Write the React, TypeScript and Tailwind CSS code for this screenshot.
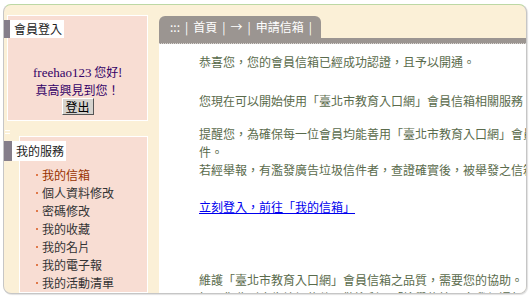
import React from 'react'

const cjk = { fontFamily: '"Noto Sans CJK TC", "Noto Sans", sans-serif' }

const services = ['我的信箱', '個人資料修改', '密碼修改', '我的收藏', '我的名片', '我的電子報', '我的活動清單']

function SideLabel({ text, h, w, bar }: { text: string; h: string; w: string; bar: string }) {
  return (
    <div className={`flex ${h} ${w} bg-white`}>
      <div className={`${bar} bg-[#857e8a]`} />
      <span className="pl-[4px] text-[12px] leading-none self-center text-[#222]">{text}</span>
    </div>
  )
}

export default function App() {
  return (
    <div className="w-[530px] h-[300px] bg-white pt-[4px] pl-[3px]" style={cjk}>
      <div className="w-[524px] h-[290px] flex overflow-hidden rounded-[8px] border border-[#c6c6c6] border-t-[#bcd8a4] bg-[#fbf0d7] shadow-[1px_1px_1px_rgba(0,0,0,0.12)]">
        {/* left column */}
        <div className="w-[155px] shrink-0 flex flex-col">
          <div className="mt-[10px] ml-[3px] w-[141px] h-[106px] border border-white bg-[#f8ddd3] flex flex-col">
            <div className="mt-[4px] -ml-[4px]">
              <SideLabel text="會員登入" h="h-[18px]" w="w-[60px]" bar="w-[6px]" />
            </div>
            <div className="mt-[25px] flex flex-col items-center text-[#330066] text-[12px] leading-[17px]">
              <span>
                <span style={{ fontFamily: '"Liberation Serif", serif' }} className="text-[13px]">freehao123</span> 您好!
              </span>
              <span>真高興見到您！</span>
              <button className="w-[32px] h-[17px] bg-[#d6d3ce] border border-t-white border-l-white border-r-[#555] border-b-[#555] text-[12px] leading-none text-black">
                登出
              </button>
            </div>
          </div>
          <div className="mt-[9px] ml-[1px] flex flex-col gap-[2px]">
            <div className="w-[5px] h-px bg-white" />
            <div className="w-[5px] h-px bg-white" />
          </div>
          <div className="mt-[2px] ml-[15px] w-[129px] flex-1 border border-white bg-[#f8ddd3] flex flex-col">
            <div className="mt-[4px] -ml-[16px]">
              <SideLabel text="我的服務" h="h-[20px]" w="w-[62px]" bar="w-[8px]" />
            </div>
            <ul className="mt-[5px] pl-[16px] text-[12px] leading-[18px]">
              {services.map((s, i) => (
                <li key={s} className="flex items-center">
                  <span className="w-[2px] h-[2px] bg-[#e0794a] mr-[4px]" />
                  <span className={i === 0 ? 'text-[#993300]' : 'text-[#333]'}>{s}</span>
                </li>
              ))}
            </ul>
          </div>
        </div>

        {/* right column */}
        <div className="flex-1 flex flex-col min-w-0">
          <div className="mt-[11px] w-[162px] h-[22px] rounded-t-[6px] bg-[#9b9591] text-white text-[12px] flex items-center pl-[11px] gap-[5px]">
            <span>:::</span>
            <span>|</span>
            <span>首頁</span>
            <span>|</span>
            <span>→</span>
            <span>|</span>
            <span>申請信箱</span>
            <span>|</span>
          </div>
          <div className="h-[6px] bg-[#9b9591] border-b border-dotted border-[#d8d4d0]" />
          <div className="flex-1 bg-white pl-[40px] overflow-hidden">
            <div className="w-[484px] text-[12px] leading-[18px] text-[#5a6b4c]">
              <p className="mt-[9px]">恭喜您，您的會員信箱已經成功認證，且予以開通。</p>
              <p className="mt-[21px]">您現在可以開始使用「臺北市教育入口網」會員信箱相關服務。</p>
              <p className="mt-[15px]">提醒您，為確保每一位會員均能善用「臺北市教育入口網」會員信箱，請勿寄發廣告垃圾信件。</p>
              <p>若經舉報，有濫發廣告垃圾信件者，查證確實後，被舉發之信箱將被停權。</p>
              <p className="mt-[19px]">
                <a href="#" className="text-[#0000ee] underline">立刻登入，前往「我的信箱」</a>
              </p>
              <p className="mt-[55px]">維護「臺北市教育入口網」會員信箱之品質，需要您的協助。</p>
              <p>如果您收到廣告垃圾信件，歡迎利用「檢舉信箱」向我們通報。</p>
            </div>
          </div>
        </div>
      </div>
    </div>
  )
}
